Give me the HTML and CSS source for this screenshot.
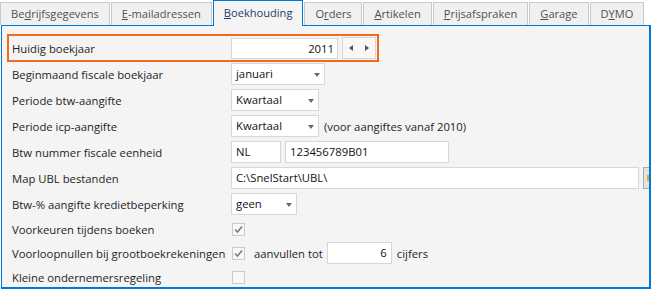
FILE: index.html
```html
<!DOCTYPE html>
<html lang="nl">
<head>
    <meta charset="UTF-8">
    <title>Boekhouding</title>
    <link rel="stylesheet" href="styles.css">
</head>
<body>
    <div class="window">
        <ul class="tabs">
            <li class="tab">Be<u>d</u>rijfsgegevens</li>
            <li class="tab"><u>E</u>-mailadressen</li>
            <li class="tab active"><u>B</u>oekhouding</li>
            <li class="tab">O<u>r</u>ders</li>
            <li class="tab"><u>A</u>rtikelen</li>
            <li class="tab"><u>P</u>rijsafspraken</li>
            <li class="tab"><u>G</u>arage</li>
            <li class="tab">D<u>Y</u>MO</li>
        </ul>

        <div class="panel">
            <div class="current">
                <span class="label">Huidig boekjaar</span>
                <span class="field num w-year">2011</span>
                <span class="spinner">
                    <svg width="6" height="8" viewBox="0 0 6 8"><path d="M5 1 L1 4 L5 7 Z" fill="#555"/></svg>
                    <svg width="6" height="8" viewBox="0 0 6 8"><path d="M1 1 L5 4 L1 7 Z" fill="#555"/></svg>
                </span>
            </div>

            <div class="row">
                <span class="label">Beginmaand fiscale boekjaar</span>
                <span class="field select w-month">januari</span>
            </div>
            <div class="row">
                <span class="label">Periode btw-aangifte</span>
                <span class="field select w-period">Kwartaal</span>
            </div>
            <div class="row">
                <span class="label">Periode icp-aangifte</span>
                <span class="field select w-period">Kwartaal</span>
                <span class="note">(voor aangiftes vanaf 2010)</span>
            </div>
            <div class="row">
                <span class="label">Btw nummer fiscale eenheid</span>
                <span class="field w-country">NL</span>
                <span class="field w-vat">123456789B01</span>
            </div>
            <div class="row">
                <span class="label">Map UBL bestanden</span>
                <span class="field w-path">C:\SnelStart\UBL\</span>
                <span class="browse"><span class="folder"></span></span>
            </div>
            <div class="row">
                <span class="label">Btw-% aangifte kredietbeperking</span>
                <span class="field select w-credit">geen</span>
            </div>

            <div class="row check">
                <span class="label">Voorkeuren tijdens boeken</span>
                <span class="checkbox"><svg width="11" height="11" viewBox="0 0 11 11"><path d="M2 5.5 L4.5 8 L9 2.5" fill="none" stroke="#7d7d7d" stroke-width="1.6"/></svg></span>
            </div>
            <div class="row check">
                <span class="label">Voorloopnullen bij grootboekrekeningen</span>
                <span class="checkbox"><svg width="11" height="11" viewBox="0 0 11 11"><path d="M2 5.5 L4.5 8 L9 2.5" fill="none" stroke="#7d7d7d" stroke-width="1.6"/></svg></span>
                <span class="note wide">aanvullen tot</span>
                <span class="field num w-digits">6</span>
                <span class="note">cijfers</span>
            </div>
            <div class="row check">
                <span class="label">Kleine ondernemersregeling</span>
                <span class="checkbox"></span>
            </div>
        </div>
    </div>
</body>
</html>
```

FILE: styles.css
```css
body {
    margin: 0;
    background: #fff;
    font-family: "Open Sans", "Noto Sans", sans-serif;
    font-size: 11.3px;
    color: #1e1e1e;
}

.window {
    width: 651px;
    height: 289px;
    overflow: hidden;
}

/* tab strip */
.tabs {
    display: flex;
    align-items: flex-end;
    gap: 1px;
    height: 25px;
    margin: 0;
    padding: 0;
    list-style: none;
    position: relative;
    z-index: 1;
}

.tab {
    box-sizing: border-box;
    height: 23px;
    padding: 0 10px;
    border: 1px solid #c9c9c9;
    border-bottom: none;
    background: #f0f0f0;
    color: #505050;
    font-size: 11.1px;
    line-height: 22px;
    white-space: nowrap;
}

.tab.active {
    height: 26px;
    margin-bottom: -1px;
    border-color: #0078d7;
    background: #f4f4f4;
    color: #1d3b6b;
    line-height: 24px;
}

/* content panel */
.panel {
    box-sizing: border-box;
    height: 264px;
    margin-left: 1px;
    padding-top: 8px;
    border: 1px solid #0078d7;
    border-width: 1px 2px 2px 1px;
    background: #f4f4f4;
    overflow: hidden;
}

.label {
    flex: none;
    width: 219px;
    white-space: nowrap;
}

.current {
    display: flex;
    align-items: center;
    box-sizing: border-box;
    width: 372px;
    height: 28px;
    margin-left: 5px;
    padding: 0 1px 0 3px;
    border: 2px solid #f26a1b;
}

.row {
    display: flex;
    align-items: center;
    height: 22px;
    margin-top: 4px;
    padding-left: 10px;
    white-space: nowrap;
}

.current + .row {
    margin-top: 1px;
}

.row.check {
    margin-top: 2px;
}

.row:not(.check) + .row.check {
    margin-top: 3px;
}

/* inputs */
.field {
    flex: none;
    box-sizing: border-box;
    height: 22px;
    padding: 0 4px;
    border: 1px solid #d7d7d7;
    background: #fff;
    color: #111;
    line-height: 20px;
}

.field + .field {
    margin-left: 4px;
}

.num {
    text-align: right;
}

.select {
    position: relative;
}

.select::after {
    content: "";
    position: absolute;
    right: 4px;
    top: 9px;
    border-left: 3.5px solid transparent;
    border-right: 3.5px solid transparent;
    border-top: 4px solid #6a6a6a;
}

.w-year { width: 107px; height: 21px; line-height: 19px; padding-right: 3px; }
.w-month { width: 94px; }
.w-period { width: 88px; }
.w-country { width: 50px; }
.w-vat { width: 164px; }
.w-path { width: 408px; }
.w-credit { width: 66px; }
.w-digits { width: 65px; padding-right: 4px; }

.spinner {
    display: flex;
    align-items: center;
    justify-content: space-around;
    box-sizing: border-box;
    width: 34px;
    height: 22px;
    margin-left: 4px;
    border: 1px solid #d7d7d7;
    background: #f7f7f7;
}

.spinner svg {
    display: block;
}

.note {
    margin-left: 5px;
    color: #1e1e1e;
}

.note.wide {
    margin-left: 9px;
    margin-right: 4px;
}

.browse {
    flex: none;
    box-sizing: border-box;
    width: 24px;
    height: 22px;
    margin-left: 4px;
    border: 1px solid #a9a9a9;
    background: #e3e3e3;
    padding: 7px 0 0 3px;
}

.folder {
    display: block;
    width: 8px;
    height: 6px;
    background: #e0a82e;
}

/* checkboxes */
.checkbox {
    box-sizing: border-box;
    width: 13px;
    height: 13px;
    margin-left: 1px;
    border: 1px solid #cbcbcb;
    background: #f8f8f8;
}

.checkbox svg {
    display: block;
}
```
